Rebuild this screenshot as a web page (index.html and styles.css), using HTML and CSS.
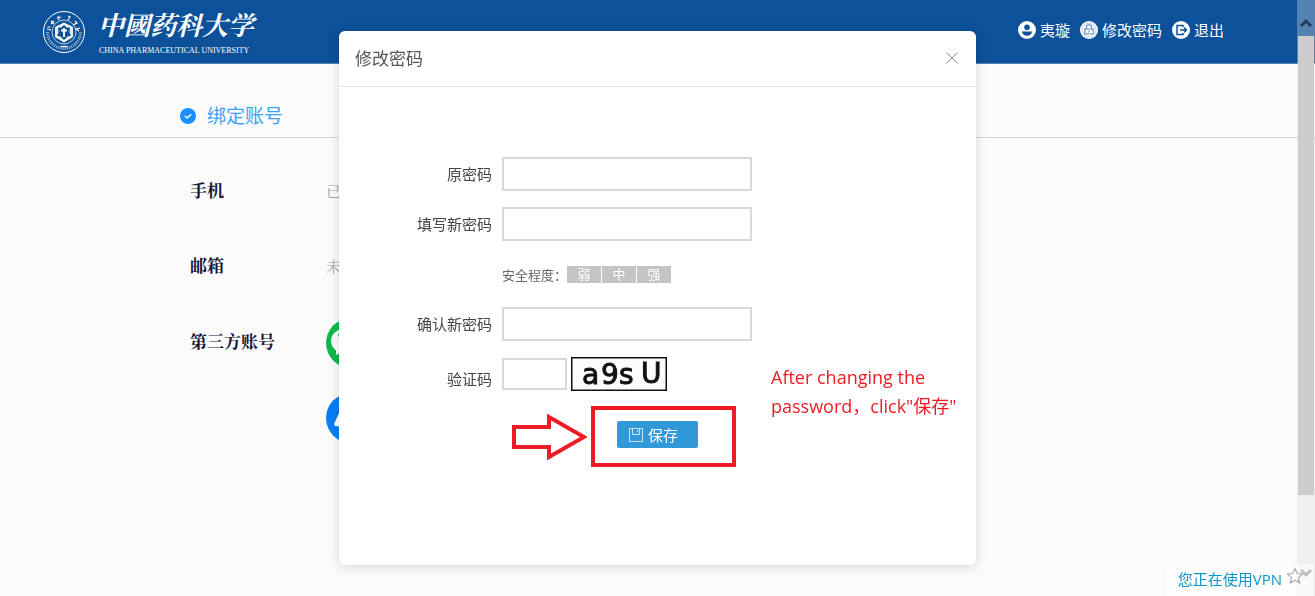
FILE: index.html
```html
<!DOCTYPE html>
<html lang="zh-CN">
<head>
    <meta charset="UTF-8">
    <meta name="viewport" content="width=device-width, initial-scale=1.0">
    <title>修改密码</title>
    <link rel="stylesheet" href="styles.css">
</head>
<body>
    <header class="header">
        <div class="logo">
            <svg class="logo-seal" viewBox="0 0 44 44" fill="none" stroke="#fff">
                <circle cx="22" cy="22" r="20.5" stroke-width="1"/>
                <circle cx="22" cy="22" r="12" stroke-width=".7"/>
                <path d="M5.500 22a16.500 16.500 0 0 0 33 0" stroke-width="3" stroke-dasharray="1.200 1" opacity=".55"/>
                <path d="M5 19l4 1M5.500 17h3M9 11l3 3M9 14l3-3M16 6l1 4M15 8.500l4-1.500M26 6l2 1-2 3M33 11l2 2-4 2M38 18l-4 1 3 2" stroke-width="1.200"/>
                <path d="M22 13.500l8 4v9l-8 5-8-5v-9z" stroke-width="1.800"/>
                <path d="M22 14l-3 3h-4l1 5-2 4 4 1 4 4 4-4 4-1-2-4 1-5h-4z" stroke-width="1.200"/>
                <path d="M22 18v9M19 20.500h6" stroke-width="1.800"/>
                <path d="M18.500 36.500h7" stroke-width="1.200"/>
            </svg>
            <div class="logo-text">
                <span class="logo-cn">中國药科大学</span>
                <span class="logo-en">CHINA PHARMACEUTICAL UNIVERSITY</span>
            </div>
        </div>
        <nav class="nav">
            <a href="#">
                <svg class="nav-icon" viewBox="0 0 18 18">
                    <circle cx="9" cy="9" r="9" fill="#fff"/>
                    <circle cx="9" cy="6.300" r="2.800" fill="#0c5199"/>
                    <path d="M3.800 10.500h10.400c-.5 2.800-2.700 4.300-5.200 4.300s-4.700-1.500-5.200-4.300z" fill="#0c5199"/>
                </svg>
                夷璇
            </a>
            <a href="#">
                <svg class="nav-icon" viewBox="0 0 18 18" fill="none" stroke="#5d89bb">
                    <circle cx="9" cy="9" r="9" fill="#fff" stroke="none"/>
                    <circle cx="9" cy="9" r="7" stroke-width=".4"/>
                    <path d="M4.800 8h8.400v5H4.800zM6.300 8V6.500a2.700 2.700 0 0 1 5.400 0V8M9 9.500v2" stroke-width="1.100"/>
                </svg>
                修改密码
            </a>
            <a href="#">
                <svg class="nav-icon" viewBox="0 0 18 18" fill="none" stroke="#0c5199" stroke-width="1.500">
                    <circle cx="9" cy="9" r="9" fill="#fff" stroke="none"/>
                    <path d="M11 6V4.500H5v9h6V12M8 9h6M12 6.500L14.500 9 12 11.500"/>
                </svg>
                退出
            </a>
        </nav>
    </header>

    <main>
        <div class="section-title">
            <svg class="check" viewBox="0 0 16 16">
                <circle cx="8" cy="8" r="8" fill="#1890ff"/>
                <path d="M4.800 7.800l2.400 2.200 4-3.800" fill="none" stroke="#fff" stroke-width="1.300"/>
            </svg>
            <h2>绑定账号</h2>
        </div>
        <dl class="accounts">
            <div class="account">
                <dt>手机</dt>
                <dd>已绑定</dd>
            </div>
            <div class="account">
                <dt>邮箱</dt>
                <dd>未绑定</dd>
            </div>
            <div class="account account-social">
                <dt>第三方账号</dt>
                <dd class="social">
                    <!-- wechat -->
                    <svg viewBox="0 0 50 50">
                        <circle cx="25" cy="25" r="25" fill="#0fb94b"/>
                        <path d="M22 10c-9 0-17 5-17 13 0 4 2 7 5 9.500L10 37l6-3c12 3 22-3 22-12s-7-12-16-12z" fill="#fff"/>
                        <circle cx="14" cy="17" r="2" fill="#0fb94b"/>
                        <circle cx="27" cy="17" r="2" fill="#0fb94b"/>
                    </svg>
                    <!-- dingtalk -->
                    <svg viewBox="0 0 50 50">
                        <circle cx="25" cy="25" r="25" fill="#087ef5"/>
                        <path d="M14 18l22 7-9 16 1-8h-5l3-6z" fill="#fff"/>
                        <path d="M13 20l-5 11 1 2 9 1zM12 38l8 4 1-4z" fill="#fff"/>
                    </svg>
                </dd>
            </div>
        </dl>
    </main>

    <div class="scrollbar">
        <div class="scroll-up">
            <svg viewBox="0 0 12 10"><path d="M1 8l5-5 5 5" fill="none" stroke="#243a55" stroke-width="3"/></svg>
        </div>
        <div class="scroll-thumb"></div>
        <div class="scroll-down">
            <svg viewBox="0 0 12 10"><path d="M1 2l5 5 5-5" fill="none" stroke="#606060" stroke-width="3"/></svg>
        </div>
    </div>

    <div class="overlay">
        <div class="modal" role="dialog" aria-labelledby="modalTitle">
            <div class="modal-header">
                <h3 id="modalTitle">修改密码</h3>
                <button type="button" class="close" aria-label="关闭">
                    <svg viewBox="0 0 12 12"><path d="M.5.5l11 11M11.500.5l-11 11" stroke="#8c8c8c" stroke-width="1"/></svg>
                </button>
            </div>
            <div class="modal-body">
                <form class="form">
                    <label for="oldPwd">原密码</label>
                    <input type="password" id="oldPwd">

                    <label for="newPwd">填写新密码</label>
                    <input type="password" id="newPwd">

                    <div class="strength">
                        <span class="strength-label">安全程度：</span>
                        <span class="level">弱</span>
                        <span class="level">中</span>
                        <span class="level">强</span>
                    </div>

                    <label for="confirmPwd">确认新密码</label>
                    <input type="password" id="confirmPwd">

                    <label for="captcha" class="captcha-label">验证码</label>
                    <div class="captcha-row">
                        <input type="text" id="captcha" class="captcha-input">
                        <svg class="captcha" viewBox="0 0 96 34">
                            <rect x=".75" y=".75" width="94.500" height="32.500" fill="#fcfcfc" stroke="#111" stroke-width="1.500"/>
                            <g class="captcha-chars">
                                <text x="11" y="27">a</text>
                                <text x="30" y="27">9</text>
                                <text x="48" y="27">s</text>
                                <text x="70" y="26">U</text>
                            </g>
                        </svg>
                    </div>

                    <button type="button" class="save">
                        <svg viewBox="0 0 14 14" fill="none" stroke="#c9e4f5" stroke-width="1">
                            <path d="M.5.5h13v13H.5zM3.500.5v6h7v-6M8.500 2v2.500"/>
                        </svg>
                        保存
                    </button>
                </form>

                <svg class="arrow" viewBox="0 0 76 46">
                    <path d="M3 13h35V3l35 20-35 20V33H3z" fill="none" stroke="#ed1c24" stroke-width="4"/>
                </svg>
                <div class="frame"></div>
                <p class="note">After changing the<br>password，click"保存"</p>
            </div>
        </div>
    </div>

    <div class="vpn">
        <a href="#">您正在使用VPN</a>
        <svg viewBox="0 0 18 18"><path d="M9 1.500l2.200 5 5.300.5-4 3.600 1.200 5.400L9 13.200 4.300 16l1.200-5.400-4-3.600 5.300-.5z" fill="none" stroke="#aaa" stroke-width="1.200"/></svg>
    </div>
</body>
</html>
```
FILE: styles.css
```css
* {
    box-sizing: border-box;
}
body {
    margin: 0;
    min-height: 100vh;
    background: #fbfbfb;
    color: #444;
    font-family: "Open Sans", "Noto Sans CJK SC", sans-serif;
    font-size: 15px;
    overflow: hidden;
}
a {
    text-decoration: none;
}
svg {
    display: block;
    flex-shrink: 0;
}

/* header */
.header {
    display: flex;
    align-items: center;
    justify-content: space-between;
    height: 64px;
    padding: 0 91px 0 42px;
    background: #0c5199;
    border-bottom: 1px solid #5482b4;
}
.logo {
    display: flex;
    align-items: center;
    gap: 12px;
    color: #fff;
}
.logo-seal {
    width: 44px;
    height: 44px;
}
.logo-text {
    display: flex;
    flex-direction: column;
}
.logo-cn {
    font-family: "Liberation Serif", "Noto Serif CJK SC", "Noto Sans CJK SC", serif;
    font-size: 26px;
    font-style: italic;
    font-weight: bold;
    line-height: 38px;
}
.logo-en {
    font-family: "Liberation Serif", serif;
    font-size: 8px;
    line-height: 10px;
    padding-left: 1px;
    white-space: nowrap;
}
.nav {
    display: flex;
    gap: 10px;
    margin-bottom: 4px;
}
.nav a {
    display: flex;
    align-items: center;
    gap: 4px;
    color: #fff;
    line-height: 20px;
}
.nav-icon {
    width: 18px;
    height: 18px;
}

/* account page */
.section-title {
    display: flex;
    align-items: center;
    gap: 11px;
    height: 74px;
    padding: 30px 180px 0;
    border-bottom: 1px solid #d5d5d5;
}
.check {
    width: 16px;
    height: 16px;
}
.section-title h2 {
    margin: 0;
    color: #3aa1f5;
    font-size: 19px;
    font-weight: normal;
    line-height: 24px;
}
.accounts {
    margin: 0;
    padding: 16px 190px;
}
.account {
    display: flex;
    align-items: center;
    min-height: 75px;
    font-family: "Liberation Serif", "Noto Serif CJK SC", "Noto Sans CJK SC", serif;
}
.account dt {
    width: 136px;
    color: #14143c;
    font-size: 17px;
    font-weight: bold;
    line-height: 24px;
}
.account dd {
    margin: 0;
    color: #a0a8a8;
    font-size: 15px;
    line-height: 20px;
}
.account-social {
    align-items: flex-start;
    padding-top: 14px;
}
.account-social dt {
    line-height: 50px;
}
.account .social {
    display: flex;
    flex-direction: column;
    gap: 25px;
}
.social svg {
    width: 50px;
    height: 50px;
}

/* scrollbar */
.scrollbar {
    position: fixed;
    top: 0;
    right: 0;
    bottom: 0;
    width: 18px;
    display: flex;
    flex-direction: column;
    background: rgba(220, 220, 220, .36);
}
.scroll-up,
.scroll-down {
    display: flex;
    align-items: center;
    justify-content: center;
    height: 36px;
}
.scroll-up {
    padding-top: 10px;
}
.scroll-down {
    margin-top: auto;
    padding-bottom: 10px;
}
.scrollbar svg {
    width: 12px;
    height: 10px;
}
.scroll-thumb {
    height: 77%;
    margin: 0 1px;
    background: #cdcdcd;
}

/* modal */
.overlay {
    position: fixed;
    top: 0;
    left: 0;
    right: 0;
    display: flex;
    justify-content: center;
    padding-top: 31px;
}
.modal {
    width: 637px;
    background: #fff;
    border-radius: 6px;
    box-shadow: 0 2px 12px rgba(0, 0, 0, .15);
}
.modal-header {
    display: flex;
    align-items: center;
    justify-content: space-between;
    padding: 15px 18px 15px 16px;
    border-bottom: 1px solid #e2e2e2;
}
.modal-header h3 {
    margin: 0;
    color: #555;
    font-size: 17px;
    font-weight: normal;
    line-height: 25px;
}
.close {
    padding: 0 0 2px;
    border: none;
    background: none;
    cursor: pointer;
}
.close svg {
    width: 12px;
    height: 12px;
}
.modal-body {
    position: relative;
    padding: 70px 0 124px;
}
.form {
    display: grid;
    grid-template-columns: 153px 250px;
    grid-auto-rows: 34px;
    gap: 16px 10px;
    align-items: center;
}
.form label {
    padding-bottom: 2px;
    text-align: right;
}
.form input {
    width: 100%;
    height: 34px;
    padding: 0 8px;
    border: 2px solid #d9d9d9;
    background: #fff;
    font-size: 15px;
}
.strength {
    grid-column: 2;
    display: flex;
    align-items: center;
    gap: 1px;
    font-size: 13px;
}
.strength-label {
    width: 64px;
    color: #666;
    white-space: nowrap;
}
.level {
    width: 34px;
    background: #c4c4c4;
    color: #fff;
    line-height: 17px;
    text-align: center;
}
.form .captcha-label {
    padding-top: 10px;
}
.captcha-row {
    display: flex;
    align-items: center;
    gap: 4px;
}
.form .captcha-input {
    width: 65px;
    height: 32px;
}
.captcha {
    width: 96px;
    height: 34px;
    overflow: visible;
}
.captcha-chars {
    font-family: "DejaVu Sans", sans-serif;
    font-size: 28px;
    fill: #111;
    stroke: #111;
    stroke-width: 1px;
}
.save {
    grid-column: 2;
    align-self: start;
    display: flex;
    align-items: center;
    gap: 5px;
    width: 81px;
    height: 27px;
    margin: 14px 0 0 115px;
    padding: 0 12px;
    border: none;
    border-radius: 2px;
    background: #3199d8;
    color: #fff;
    font-family: inherit;
    font-size: 15px;
    cursor: pointer;
}
.save svg {
    width: 14px;
    height: 14px;
}

/* red marks */
.arrow {
    position: absolute;
    top: 327px;
    left: 172px;
    width: 76px;
    height: 46px;
}
.frame {
    position: absolute;
    top: 319px;
    left: 252px;
    width: 145px;
    height: 61px;
    border: 4px solid #ed1c24;
    pointer-events: none;
}
.note {
    position: absolute;
    top: 276px;
    left: 432px;
    margin: 0;
    color: #ed1c24;
    font-size: 18px;
    line-height: 29px;
    white-space: nowrap;
}

/* vpn badge */
.vpn {
    position: fixed;
    right: 2px;
    bottom: 0;
    display: flex;
    gap: 4px;
    padding: 3px 9px 5px 11px;
    background: rgba(255, 255, 255, .6);
    line-height: 24px;
}
.vpn a {
    color: #0c96c8;
}
.vpn svg {
    width: 18px;
    height: 18px;
}
```
